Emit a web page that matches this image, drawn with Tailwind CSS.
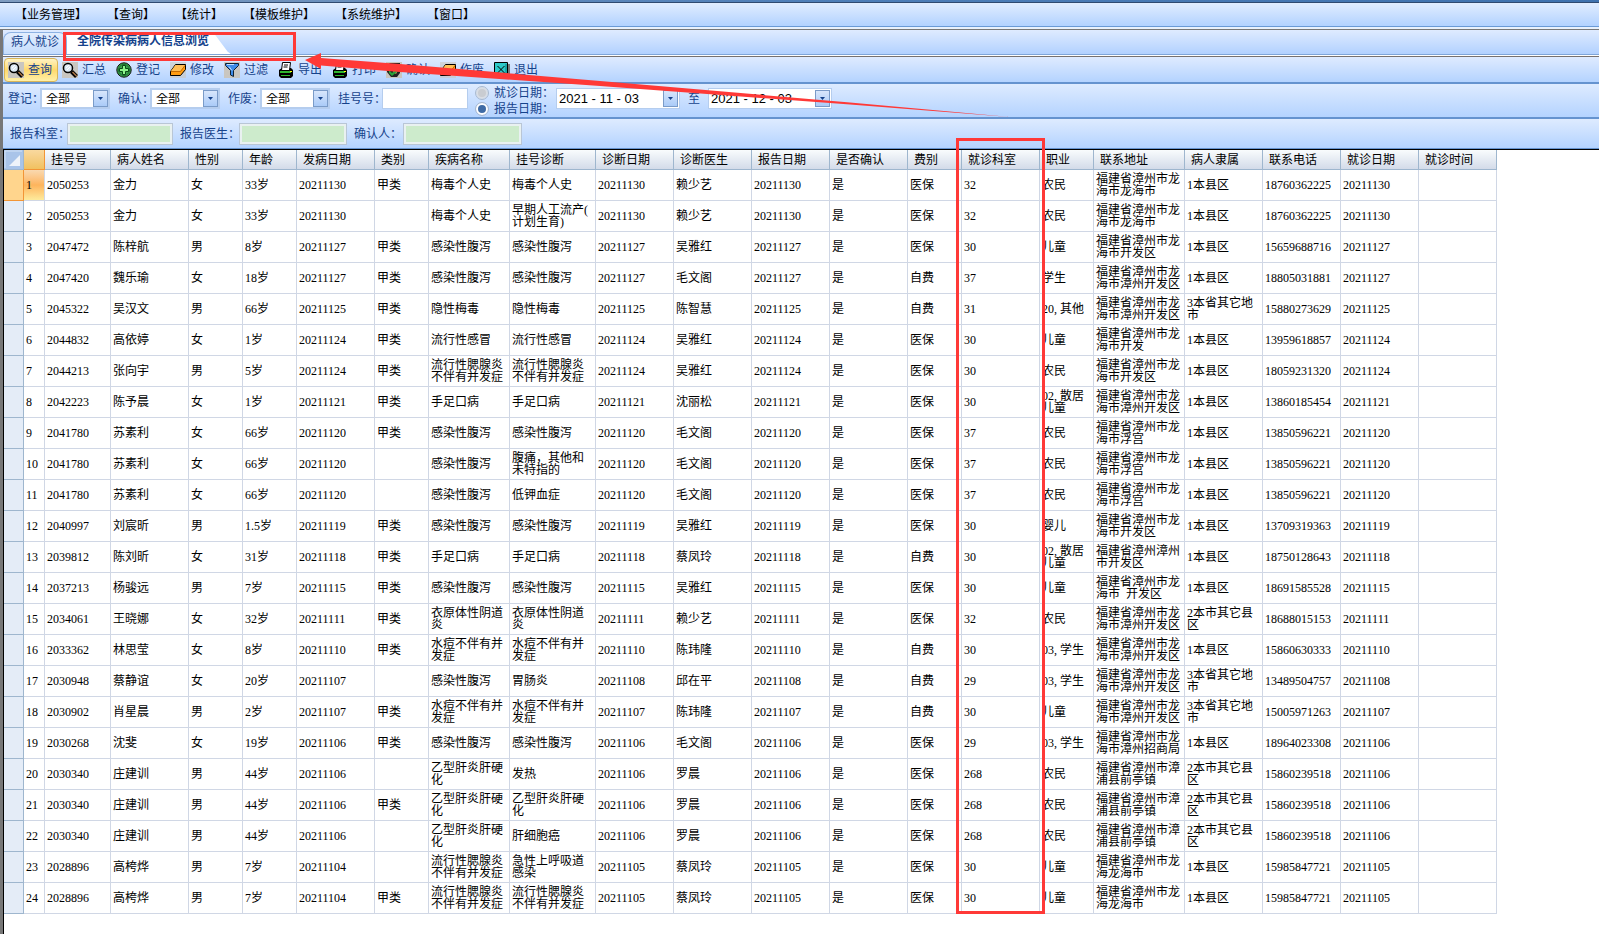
<!DOCTYPE html>
<html lang="zh-CN">
<head>
    <meta charset="UTF-8">
    <meta name="viewport" content="width=device-width, initial-scale=1.0">
    <title>全院传染病病人信息浏览</title>
    <script src="https://cdn.jsdelivr.net/npm/@tailwindcss/browser@4"></script>
</head>
<body class="relative min-h-screen overflow-hidden bg-white font-['Liberation_Serif','Noto_Sans_CJK_SC',sans-serif] text-[12px] leading-3 text-black">

    <!-- Menu -->
    <div class="h-[3px] border-b border-[#2f4a70] bg-linear-to-r from-[#7f9cc0] via-[#4f7fb8] to-[#3f72ae]"></div>
    <nav class="flex h-6 items-center gap-5 whitespace-nowrap border-b border-[#6a9ad6] bg-linear-to-b from-[#e1edff] to-[#b2d2ff] pl-[15px]">
        <a href="#">【业务管理】</a>
        <a href="#">【查询】</a>
        <a href="#">【统计】</a>
        <a href="#">【模板维护】</a>
        <a href="#">【系统维护】</a>
        <a href="#">【窗口】</a>
    </nav>
    <div class="h-0.5 bg-[#e8f1fd]"></div>

    <main class="border-l-3 border-t border-[#777] text-[#15428b]">
        <!-- Tabs -->
        <div class="flex h-[25px] items-end border-b border-[#7fa5d8] bg-linear-to-b from-[#dfebff] to-[#b2d1ff]">
            <button class="h-[22px] w-16 rounded-t-lg border border-b-0 border-[#8db2e3] bg-linear-to-b from-[#e3eefe] to-[#c4dcfc] pb-1 whitespace-nowrap">病人就诊</button>
            <button class="h-[22px] w-[164px] bg-white pr-4 pb-1 pl-1 font-bold whitespace-nowrap [clip-path:polygon(0_0,89%_0,98%_90%,100%_100%,0_100%)]">全院传染病病人信息浏览</button>
        </div>
        <div class="h-0.5 border-b border-[#77716f] bg-white"></div>

        <!-- Toolbar -->
        <div id="toolbar" class="flex h-[27px] items-center border-b-2 border-[#6593cf] bg-linear-to-b from-[#dfebff] to-[#b4d3ff] pl-px">
        </div>

        <!-- Filters -->
        <form class="flex h-[35px] items-center gap-2 border-b-2 border-[#6593cf] bg-linear-to-b from-[#deebff] to-[#b4d3ff] pb-1 pl-[5px] whitespace-nowrap">
            <div class="flex items-center">
                <label for="reg" class="w-8">登记：</label>
                <div class="relative">
                    <select id="reg" class="block h-[21px] w-[70px] appearance-none border-2 border-[#b5cdee] bg-white pl-1 text-black"><option>全部</option></select>
                    <span class="pointer-events-none absolute top-0.5 right-0.5 flex h-[17px] w-[15px] items-center justify-center border border-[#7a9bc8] bg-linear-to-b from-[#d8e6fb] to-[#aacbf8]"><svg width="5" height="3"><path d="M0 0h5L2.500 3z" fill="#15428b"/></svg></span>
                </div>
            </div>
            <div class="flex items-center">
                <label for="conf" class="w-8">确认：</label>
                <div class="relative">
                    <select id="conf" class="block h-[21px] w-[70px] appearance-none border-2 border-[#b5cdee] bg-white pl-1 text-black"><option>全部</option></select>
                    <span class="pointer-events-none absolute top-0.5 right-0.5 flex h-[17px] w-[15px] items-center justify-center border border-[#7a9bc8] bg-linear-to-b from-[#d8e6fb] to-[#aacbf8]"><svg width="5" height="3"><path d="M0 0h5L2.500 3z" fill="#15428b"/></svg></span>
                </div>
            </div>
            <div class="flex items-center">
                <label for="void" class="w-8">作废：</label>
                <div class="relative">
                    <select id="void" class="block h-[21px] w-[70px] appearance-none border-2 border-[#b5cdee] bg-white pl-1 text-black"><option>全部</option></select>
                    <span class="pointer-events-none absolute top-0.5 right-0.5 flex h-[17px] w-[15px] items-center justify-center border border-[#7a9bc8] bg-linear-to-b from-[#d8e6fb] to-[#aacbf8]"><svg width="5" height="3"><path d="M0 0h5L2.500 3z" fill="#15428b"/></svg></span>
                </div>
            </div>
            <div class="flex items-center">
                <label for="regno" class="w-11">挂号号：</label>
                <input id="regno" type="text" class="h-[21px] w-[86px] border border-[#b5cdee] bg-white px-1 text-black">
            </div>
            <div class="flex w-[72px] flex-col gap-1 pt-1">
                <label class="flex items-center gap-1.5"><input type="radio" name="by" class="size-3 shrink-0 appearance-none rounded-full border-2 border-[#d8dde4] bg-[#c9ccd1] outline outline-[#a9b9cf]">就诊日期：</label>
                <label class="flex items-center gap-1.5"><input type="radio" name="by" checked class="size-3 shrink-0 appearance-none rounded-full border-2 border-white bg-[#3f6ba5] outline outline-[#a9b9cf]">报告日期：</label>
            </div>
            <div class="relative">
                <input type="text" aria-label="开始日期" value="2021 - 11 - 03" class="block h-[21px] w-[124px] border border-[#b5cdee] bg-white pl-0.5 font-['Liberation_Sans'] text-[13px] text-black">
                <button type="button" aria-label="选择开始日期" class="absolute top-0.5 right-0.5 flex h-[17px] w-[15px] items-center justify-center border border-[#7a9bc8] bg-linear-to-b from-[#d8e6fb] to-[#aacbf8]"><svg width="5" height="3"><path d="M0 0h5L2.500 3z" fill="#15428b"/></svg></button>
            </div>
            <span>至</span>
            <div class="relative">
                <input type="text" aria-label="结束日期" value="2021 - 12 - 03" class="block h-[21px] w-[124px] border border-[#b5cdee] bg-white pl-0.5 font-['Liberation_Sans'] text-[13px] text-black">
                <button type="button" aria-label="选择结束日期" class="absolute top-0.5 right-0.5 flex h-[17px] w-[15px] items-center justify-center border border-[#7a9bc8] bg-linear-to-b from-[#d8e6fb] to-[#aacbf8]"><svg width="5" height="3"><path d="M0 0h5L2.500 3z" fill="#15428b"/></svg></button>
            </div>
        </form>
        <form class="flex h-[30px] items-center gap-2 border-b border-[#6593cf] bg-linear-to-b from-[#deebff] to-[#b4d3ff] pl-[7px] whitespace-nowrap">
            <div class="flex items-center">
                <label for="dept" class="w-[58px]">报告科室：</label>
                <input id="dept" type="text" class="h-5 w-[104px] border-2 border-[#e9f1f1] bg-[#cdebcc] outline outline-[#b9c6d6]">
            </div>
            <div class="flex items-center">
                <label for="doctor" class="w-15">报告医生：</label>
                <input id="doctor" type="text" class="h-5 w-[106px] border-2 border-[#e9f1f1] bg-[#cdebcc] outline outline-[#b9c6d6]">
            </div>
            <div class="flex items-center">
                <label for="confirmer" class="w-[50px]">确认人：</label>
                <input id="confirmer" type="text" class="h-5 w-[117px] border-2 border-[#e9f1f1] bg-[#cdebcc] outline outline-[#b9c6d6]">
            </div>
        </form>

        <!-- Patient list -->
        <div class="h-[785px] overflow-hidden border-t border-l border-black bg-white text-black">
            <table class="w-[1493px] table-fixed border-separate border-spacing-0 text-left">
                <colgroup id="cols"></colgroup>
                <thead>
                    <tr id="head"></tr>
                </thead>
                <tbody id="result"></tbody>
            </table>
        </div>
    </main>

    <!-- Red marks -->
    <svg class="pointer-events-none absolute inset-0 size-full" aria-hidden="true">
        <rect x="64.500" y="33.500" width="230" height="26" fill="none" stroke="#ff3937" stroke-width="3"/>
        <rect x="957.500" y="139.500" width="86" height="773" fill="none" stroke="#ff3937" stroke-width="3"/>
        <path d="M305 60L321 53L321 58L400 64L600 81L850 102.500L1010 117L850 104.500L600 86L400 72L321 65.500L321 69Z" fill="#ff3937"/>
    </svg>

    <script>
        const search = `<path d="M0 0h16v16H0z" fill="#c9c6c0"/><circle cx="6" cy="6" r="4.500" fill="#dce9f5" stroke="#000" stroke-width="1.500"/><path d="M4 6l3-3M5 8l3-3" stroke="#fff"/><path d="M9.500 9.500l5 5" stroke="#000" stroke-width="4"/><path d="M10.500 10l4 4" stroke="#b07a48" stroke-width="1.500"/>`
        const eraser = `<path d="M0 0h16v16H0z" fill="#c9c6c0" opacity=".6"/><path d="M5.500 2.500h10v5l-5 6H.500v-4z" fill="#ff9c12" stroke="#000"/><path d="M5.500 3h9.500l-4.500 6H1z" fill="#ffbe55"/><path d="M1 9.500h9.500l4.500-6" fill="none" stroke="#c56a00"/>`
        const printer = `<path d="M1 8l3-2h9l2 2v6l-2 2H3l-2-2z" fill="#000"/><path d="M4.500.500h8l-1 8h-8z" fill="#fff" stroke="#000"/><path d="M6 3h4M5.500 5h4" stroke="#000"/><path d="M2 9h11v2H2zM3 13h9v1H3z" fill="#2fb52f"/><path d="M12 9h2v1h-2z" fill="#ff0"/>`
        const tools = [
            ['查询', search],
            ['汇总', search],
            ['登记', `<circle cx="8" cy="8" r="7.200" fill="#3aa64b" stroke="#111"/><circle cx="8" cy="8" r="5.500" fill="none" stroke="#1c7030"/><path d="M6.500 3.500h3v3h3v3h-3v3h-3v-3h-3v-3h3z" fill="#8df58b" stroke="#0a4a18"/>`],
            ['修改', eraser],
            ['过滤', `<path d="M0 0h16v16H0z" fill="#c9c6c0"/><path d="M1.500 1.500h13v2l-5 5v6l-3-1.500V8.500l-5-5z" fill="#3d8be8" stroke="#123"/><path d="M3 2.500h7M5 4.500l3 4" stroke="#bfe0ff"/>`],
            ['导出', printer],
            ['打印', printer],
            ['确认', `<path d="M0 0h16v16H0z" fill="#c9c6c0"/><path d="M1 3l3-2h10v10l-3 4H5l-4-5z" fill="#222"/><path d="M3 5l6-3 4 3-3 7z" fill="#f3cf73"/><path d="M3 8l3 3 6-5v3l-6 5-3-3z" fill="#2aa13a"/>`],
            ['作废', eraser],
            ['退出', `<path d="M2 2h14v14H2z" fill="#777"/><path d="M.500.500h13v12l-2 2H.500z" fill="#2ccaca" stroke="#000"/><path d="M3.500 4l7 7M10.500 4l-7 7" stroke="#000"/><path d="M12 2v10" stroke="#0a7f80"/>`]
        ]
        document.getElementById('toolbar').innerHTML = tools.map((t, k) => `
            <button class="flex h-6 w-[54px] shrink-0 items-center gap-1 border pl-[3px] whitespace-nowrap ${k ? 'border-transparent' : 'rounded-sm border-[#d9b558] bg-linear-to-b from-[#fff3c2] via-[#ffd96b] to-[#fff0a8]'}">
                <svg width="16" height="16" viewBox="0 0 16 16" class="shrink-0">${t[1]}</svg>${t[0]}
            </button>`).join('')

        const cols = [['', 20], ['', 21], ['挂号号', 66], ['病人姓名', 78], ['性别', 54], ['年龄', 54], ['发病日期', 78], ['类别', 54], ['疾病名称', 81], ['挂号诊断', 86], ['诊断日期', 78], ['诊断医生', 78], ['报告日期', 78], ['是否确认', 78], ['费别', 54], ['就诊科室', 78], ['职业', 54], ['联系地址', 91], ['病人隶属', 78], ['联系电话', 78], ['就诊日期', 78], ['就诊时间', 78]]
        document.getElementById('cols').innerHTML = cols.map(c => `<col style="width:${c[1]}px">`).join('')
        document.getElementById('head').innerHTML = cols.map((c, k) => {
            if (k == 0) return `<th aria-label="全选" class="h-5 border-r border-b border-[#9eb6ce] bg-[#a9c4e9] p-0"><svg width="19" height="19" viewBox="0 0 19 19"><path d="M1 18V1h17" fill="none" stroke="#d3e3f7"/><path d="M16 5v11H5z" fill="#eef3fa"/></svg></th>`
            if (k == 1) return `<th aria-label="序号" class="h-5 border-r border-b border-[#f29536] bg-linear-to-b from-[#f9d99f] to-[#f1c15f] p-0"></th>`
            return `<th scope="col" class="h-5 border-r border-b border-[#9eb6ce] bg-linear-to-b from-[#f9fcfd] to-[#d3dbe9] p-0 pl-1.5 font-normal whitespace-nowrap">${c[0]}</th>`
        }).join('')

        const mumps = '流行性腮腺炎/不伴有并发症'
        const pox = '水痘不伴有并/发症'
        const chl = '衣原体性阴道/炎'
        const hep = '乙型肝炎肝硬/化'
        const kfq = '福建省漳州市龙/海市开发区'
        const zzk = '福建省漳州市龙/海市漳州开发区'
        const fg = '福建省漳州市龙/海市浮宫'
        const qt = '福建省漳州市漳/浦县前亭镇'
        const here = '1本县区'
        const city = '2本市其它县/区'
        const prov = '3本省其它地/市'
        // id, name, sex, age, onset, class, disease, diagnosis, date, doctor, fee, dept, job, address, area, phone
        const rows = [
            ['2050253', '金力', '女', '33', '1130', 1, '梅毒个人史', '梅毒个人史', '1130', '赖少艺', '医保', '32', '农民', '福建省漳州市龙/海市龙海市', here, '18760362225'],
            ['2050253', '金力', '女', '33', '1130', 0, '梅毒个人史', '早期人工流产(/计划生育)', '1130', '赖少艺', '医保', '32', '农民', '福建省漳州市龙/海市龙海市', here, '18760362225'],
            ['2047472', '陈梓航', '男', '8', '1127', 1, '感染性腹泻', '感染性腹泻', '1127', '吴雅红', '医保', '30', '儿童', kfq, here, '15659688716'],
            ['2047420', '魏乐瑜', '女', '18', '1127', 1, '感染性腹泻', '感染性腹泻', '1127', '毛文阁', '自费', '37', '学生', zzk, here, '18805031881'],
            ['2045322', '吴汉文', '男', '66', '1125', 1, '隐性梅毒', '隐性梅毒', '1125', '陈智慧', '自费', '31', '20, 其他', zzk, prov, '15880273629'],
            ['2044832', '高依婷', '女', '1', '1124', 1, '流行性感冒', '流行性感冒', '1124', '吴雅红', '医保', '30', '儿童', '福建省漳州市龙/海市开发', here, '13959618857'],
            ['2044213', '张向宇', '男', '5', '1124', 1, mumps, mumps, '1124', '吴雅红', '医保', '30', '农民', kfq, here, '18059231320'],
            ['2042223', '陈予晨', '女', '1', '1121', 1, '手足口病', '手足口病', '1121', '沈丽松', '医保', '30', '02, 散居/儿童', zzk, here, '13860185454'],
            ['2041780', '苏素利', '女', '66', '1120', 1, '感染性腹泻', '感染性腹泻', '1120', '毛文阁', '医保', '37', '农民', fg, here, '13850596221'],
            ['2041780', '苏素利', '女', '66', '1120', 0, '感染性腹泻', '腹痛，其他和/未特指的', '1120', '毛文阁', '医保', '37', '农民', fg, here, '13850596221'],
            ['2041780', '苏素利', '女', '66', '1120', 0, '感染性腹泻', '低钾血症', '1120', '毛文阁', '医保', '37', '农民', fg, here, '13850596221'],
            ['2040997', '刘宸昕', '男', '1.5', '1119', 1, '感染性腹泻', '感染性腹泻', '1119', '吴雅红', '医保', '30', '婴儿', kfq, here, '13709319363'],
            ['2039812', '陈刘昕', '女', '31', '1118', 1, '手足口病', '手足口病', '1118', '蔡凤玲', '自费', '30', '02, 散居/儿童', '福建省漳州漳州/市开发区', here, '18750128643'],
            ['2037213', '杨骏远', '男', '7', '1115', 1, '感染性腹泻', '感染性腹泻', '1115', '吴雅红', '医保', '30', '儿童', '福建省漳州市龙/海市  开发区', here, '18691585528'],
            ['2034061', '王晓娜', '女', '32', '1111', 1, chl, chl, '1111', '赖少艺', '医保', '32', '农民', zzk, city, '18688015153'],
            ['2033362', '林思莹', '女', '8', '1110', 1, pox, pox, '1110', '陈玮隆', '自费', '30', '03, 学生', zzk, here, '15860630333'],
            ['2030948', '蔡静谊', '女', '20', '1107', 0, '感染性腹泻', '胃肠炎', '1108', '邱在平', '自费', '29', '03, 学生', zzk, prov, '13489504757'],
            ['2030902', '肖星晨', '男', '2', '1107', 1, pox, pox, '1107', '陈玮隆', '自费', '30', '儿童', zzk, prov, '15005971263'],
            ['2030268', '沈斐', '女', '19', '1106', 1, '感染性腹泻', '感染性腹泻', '1106', '毛文阁', '医保', '29', '03, 学生', '福建省漳州市龙/海市漳州招商局', here, '18964023308'],
            ['2030340', '庄建训', '男', '44', '1106', 0, hep, '发热', '1106', '罗晨', '医保', '268', '农民', qt, city, '15860239518'],
            ['2030340', '庄建训', '男', '44', '1106', 1, hep, hep, '1106', '罗晨', '医保', '268', '农民', qt, city, '15860239518'],
            ['2030340', '庄建训', '男', '44', '1106', 0, hep, '肝细胞癌', '1106', '罗晨', '医保', '268', '农民', qt, city, '15860239518'],
            ['2028896', '高桍烨', '男', '7', '1104', 0, mumps, '急性上呼吸道/感染', '1105', '蔡凤玲', '医保', '30', '儿童', '福建省漳州市龙/海龙海市', here, '15985847721'],
            ['2028896', '高桍烨', '男', '7', '1104', 1, mumps, mumps, '1105', '蔡凤玲', '医保', '30', '儿童', '福建省漳州市龙/海龙海市', here, '15985847721']
        ]
        document.getElementById('result').innerHTML = rows.map((r, k) => {
            const d = '2021' + r[8]
            const cells = [r[0], r[1], r[2], r[3] + '岁', '2021' + r[4], r[5] ? '甲类' : '', r[6], r[7], d, r[9], d, '是', r[10], r[11], r[12], r[13], r[14], r[15], d, '']
            return `
            <tr>
                <td class="h-[31px] border-r border-b p-0 ${k ? 'border-[#9eb6ce] bg-[#e4ecf7]' : 'border-[#f29536] bg-[#ffd58d]'}"></td>
                <td class="border-r border-b border-[#d0d7e5] p-0 pl-0.5 ${k ? '' : 'bg-linear-to-b from-[#f9d9b0] via-[#fdb45c] to-[#fdeb9c]'}">${k + 1}</td>
                ${cells.map(c => `<td class="border-r border-b border-[#d0d7e5] p-0 pl-0.5 whitespace-pre">${c.replace('/', '<br>')}</td>`).join('')}
            </tr>`
        }).join('')
    </script>
</body>
</html>
